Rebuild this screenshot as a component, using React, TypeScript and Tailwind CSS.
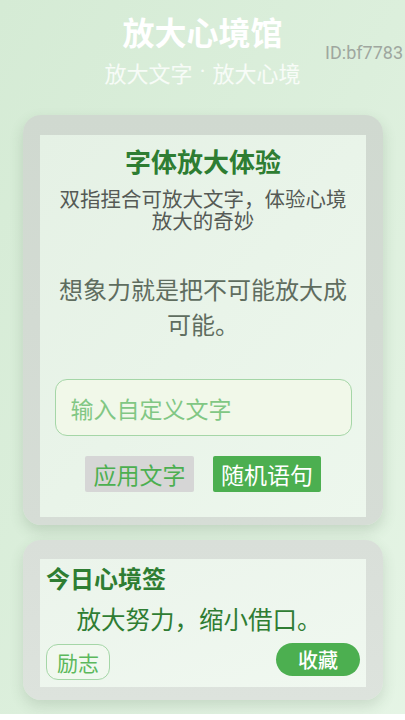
import { Home, Sparkles, BookOpen, User } from 'lucide-react';

const quote = '想象力就是把不可能放大成可能。';
const daily = '放大努力，缩小借口。';

export default function App() {
  return (
    <div
      className="relative min-h-screen w-full overflow-hidden bg-gradient-to-br from-[#d5ebd5] via-[#dcefdc] to-[#e6f5e6]"
      style={{ fontFamily: '"Noto Sans CJK SC", "Noto Sans", sans-serif' }}
    >
      {/* 头部 */}
      <header className="flex flex-col items-center pt-[10px]">
        <h1 className="text-[32px] leading-[42px] font-bold text-white">放大心境馆</h1>
        <p className="mt-[5px] flex h-[30px] items-center text-[22px] leading-[30px] text-white/80">
          <span>放大文字</span>
          <span className="mx-[7px]" style={{ fontFamily: 'Roboto, "Liberation Sans", sans-serif' }}>·</span>
          <span>放大心境</span>
        </p>
      </header>
      <span
        className="absolute right-[2px] top-[41px] text-[18px] leading-[24px] text-[#9fa79f]"
        style={{ fontFamily: 'Roboto, "Liberation Sans", sans-serif' }}
      >
        ID:bf7783
      </span>

      {/* 字体放大体验 */}
      <section className="ml-[23px] mr-[22px] mt-[28px] rounded-[18px] bg-gradient-to-b from-[#d0d9d0] to-[#d6ddd6] px-[17px] pt-[20px] pb-[8px] shadow-[0_6px_14px_rgba(60,90,60,0.18)]">
        <div className="flex flex-col items-center bg-gradient-to-br from-[#e5f1e5] to-[#edf7ed] px-[14px] pt-[9px] pb-[25px]">
          <h2 className="text-[26px] leading-[34px] font-bold text-[#2e7d32]">字体放大体验</h2>
          <p className="mt-[9px] text-center text-[20.5px] leading-[22px] text-[#555a55]">
            双指捏合可放大文字，体验心境放大的奇妙
          </p>
          <p className="mt-[40px] text-center text-[24px] leading-[35px] text-[#5f6d5f]">{quote}</p>
          <input
            autoFocus
            type="text"
            placeholder="输入自定义文字"
            className="mt-[38px] h-[57px] w-[297px] rounded-[12px] border border-[#a5d6a7] bg-[#f1f8e9] px-[15px] text-[23px] text-[#2e7d32] caret-[#c98a3a] outline-none placeholder:text-[#81c784]"
          />
          <div className="mt-[20px] flex gap-[19px]">
            <button className="h-[36px] w-[109px] rounded-[2px] bg-[#d6d6d6] text-[23px] leading-[36px] text-[#4caf50]">
              应用文字
            </button>
            <button className="h-[36px] w-[108px] rounded-[2px] bg-[#4caf50] text-[23px] leading-[36px] text-white">
              随机语句
            </button>
          </div>
        </div>
      </section>

      {/* 今日心境签 */}
      <section className="ml-[23px] mr-[22px] mt-[15px] rounded-[18px] bg-gradient-to-b from-[#d9dfd9] to-[#dde3dd] px-[17px] pt-[19px] pb-[13px] shadow-[0_6px_14px_rgba(60,90,60,0.16)]">
        <div className="flex flex-col bg-gradient-to-br from-[#ebf4eb] to-[#f0f8f0] px-[6px] pt-[3px] pb-[7px]">
          <h3 className="text-[24px] leading-[32px] font-bold text-[#2e7d32]">今日心境签</h3>
          <p className="mt-[9px] pr-[8px] text-center text-[24.5px] leading-[32px] text-[#2f7d33]">{daily}</p>
          <div className="mt-[8px] flex items-start justify-between">
            <span className="mt-[1px] h-[36px] rounded-[12px] border border-[#a5d6a7] bg-[#f1f8ef] px-[10px] text-[21px] leading-[34px] text-[#5cb85c]">
              励志
            </span>
            <button className="h-[33px] w-[84px] rounded-full bg-[#4caf50] text-[20px] leading-[33px] font-medium text-white">
              收藏
            </button>
          </div>
        </div>
      </section>

      {/* 底部导航 */}
      <nav className="mt-[14px] flex h-[56px] bg-white pt-[5px]">
        {[
          { Icon: Home, active: true },
          { Icon: Sparkles, active: false },
          { Icon: BookOpen, active: false },
          { Icon: User, active: false },
        ].map(({ Icon, active }, i) => (
          <div key={i} className="flex flex-1 justify-center">
            <Icon className={`h-[26px] w-[26px] ${active ? 'text-[#8bc34a]' : 'text-[#555]'}`} />
          </div>
        ))}
      </nav>
    </div>
  );
}
